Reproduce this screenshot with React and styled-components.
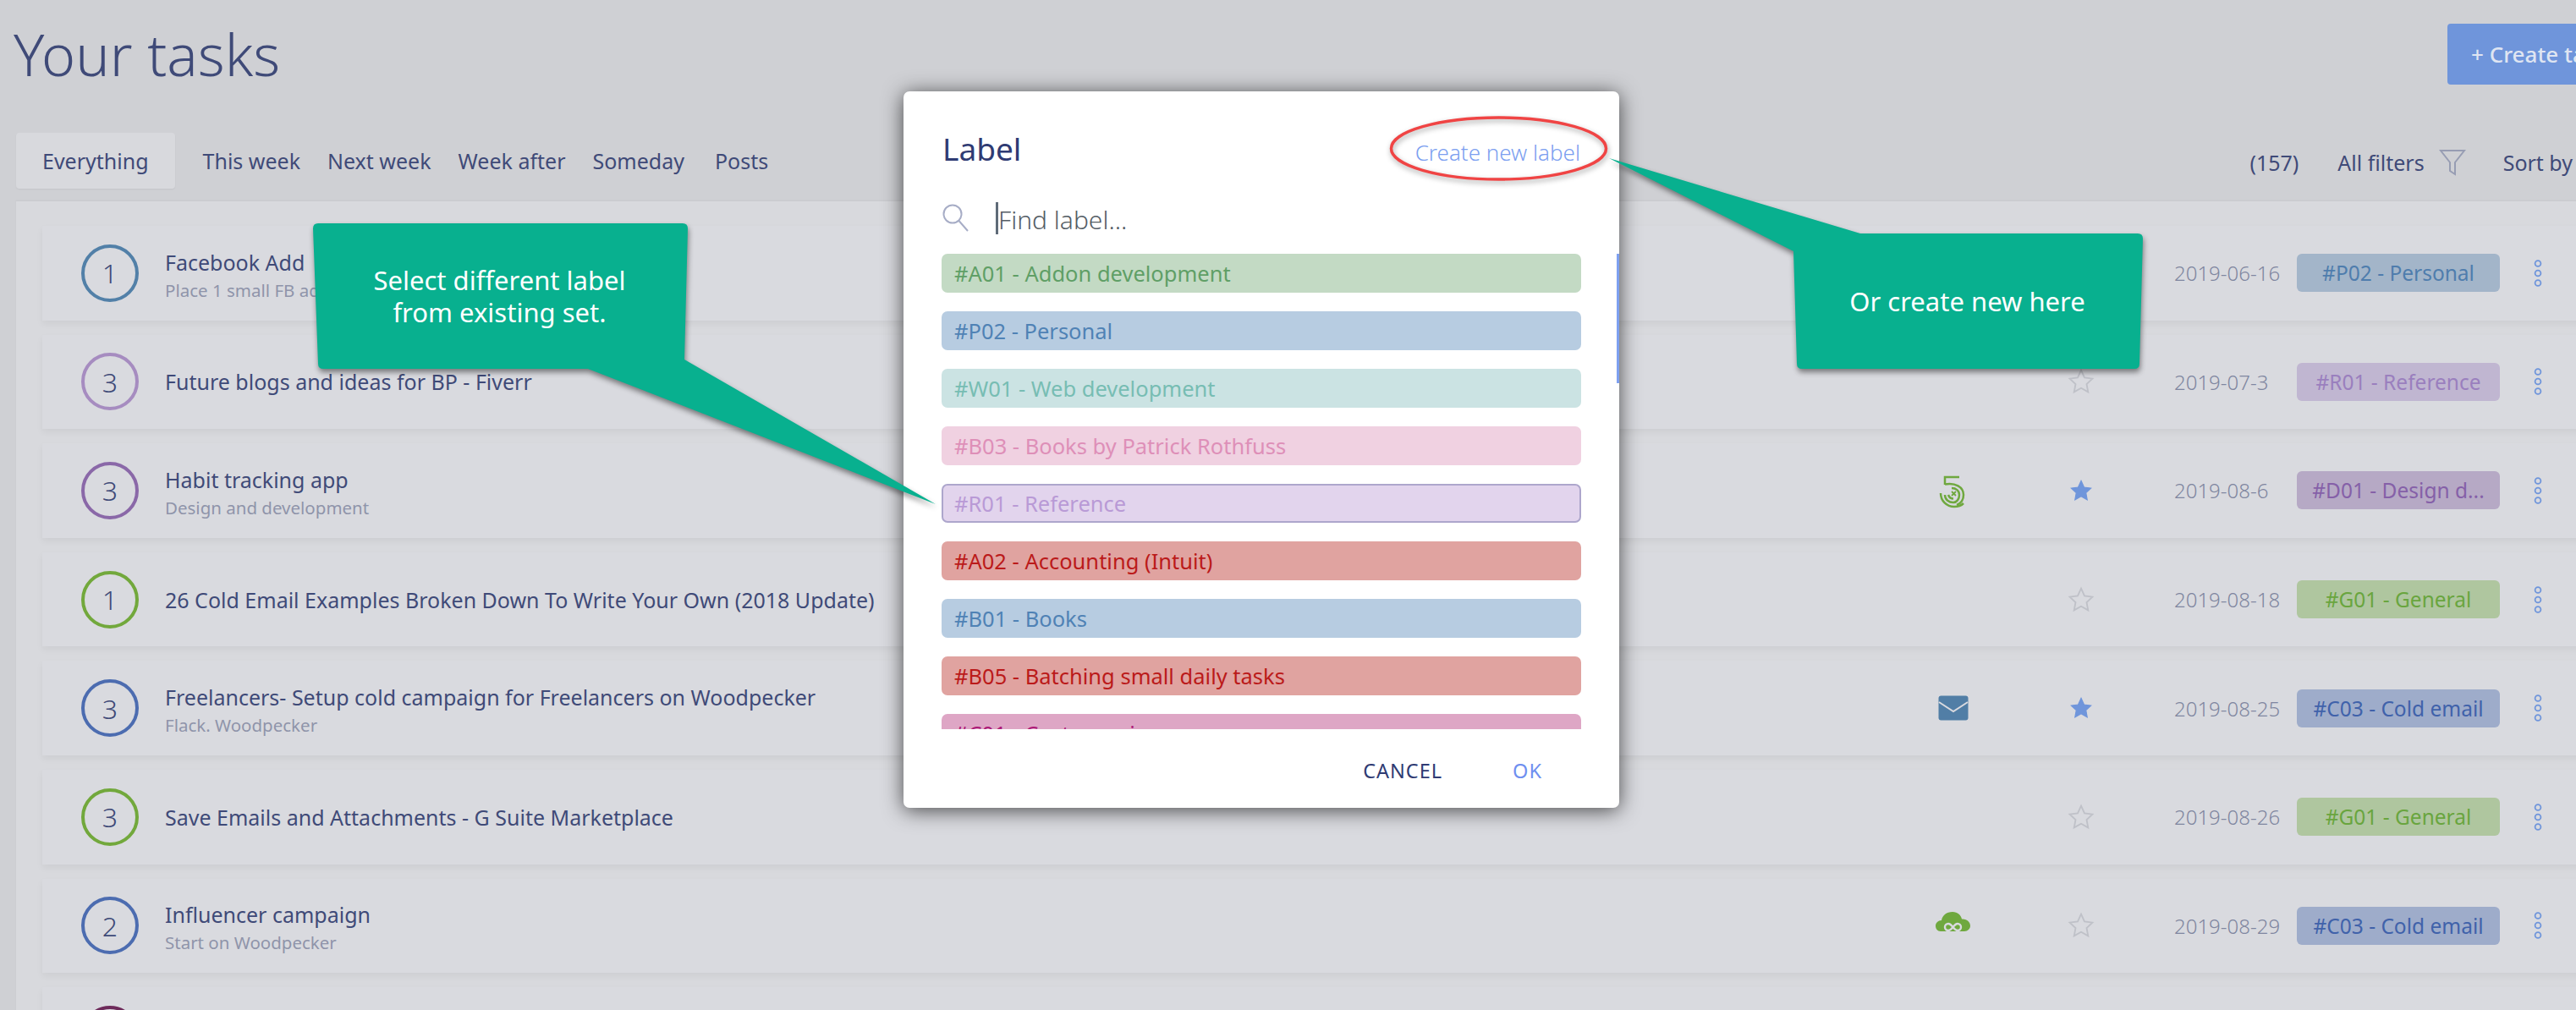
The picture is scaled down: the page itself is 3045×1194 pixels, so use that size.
import React from 'react';
import styled, { createGlobalStyle } from 'styled-components';

const GlobalStyle = createGlobalStyle`
  html, body {
    margin: 0;
    padding: 0;
    background: #cfd0d4;
  }
  body {
    font-family: "Noto Sans", "Open Sans", sans-serif;
    color: #3f4a78;
  }
`;

const Viewport = styled.div`
  position: relative;
  width: 3045px;
  height: 1194px;
  overflow: hidden;
  background: #cfd0d4;
`;

const Page = styled.div`
  width: 3110px;
`;

const Header = styled.header`
  display: flex;
  justify-content: space-between;
  align-items: center;
  height: 72px;
  padding: 28px 17px 0 16px;
`;

const Title = styled.h1`
  margin: 0;
  font-size: 68px;
  font-weight: 300;
  line-height: 72px;
  color: #3f4a78;
`;

const CreateButton = styled.button`
  width: 200px;
  height: 72px;
  padding: 0 0 0 28px;
  border: 0;
  border-radius: 4px;
  background: #6f95db;
  color: #dfe5f2;
  font-family: inherit;
  font-size: 26px;
  font-weight: 500;
  text-align: left;
  white-space: nowrap;
`;

const Toolbar = styled.div`
  display: flex;
  align-items: center;
  height: 66px;
  margin: 57px 69px 15px 19px;
  font-size: 25px;
`;

const Tab = styled.div`
  display: flex;
  align-items: center;
  height: 66px;
  padding: 0 ${p => (p.$active ? 31 : 16)}px;
  margin-left: ${p => p.$gap || 0}px;
  border-radius: 4px;
  background: ${p => (p.$active ? '#d8d9dd' : 'transparent')};
  box-shadow: ${p => (p.$active ? '0 1px 2px rgba(0,0,0,.05)' : 'none')};
`;

const ToolbarRight = styled.div`
  display: flex;
  align-items: center;
  margin-left: auto;
  padding-top: 4px;
`;

const FilterText = styled.span`
  margin-left: ${p => p.$gap || 0}px;
`;

const FunnelIcon = styled.svg`
  width: 32px;
  height: 32px;
  margin-left: 17px;
  fill: none;
  stroke: #979db3;
  stroke-width: 2;
`;

const Panel = styled.section`
  display: flex;
  flex-direction: column;
  gap: 17px;
  margin-left: 19px;
  padding: 29px 31px 40px;
  background: #d8d9dd;
  box-shadow: 0 -1px 2px rgba(0, 0, 0, 0.04);
`;

const Row = styled.article`
  display: flex;
  align-items: center;
  height: 111.6px;
  flex: none;
  padding-left: 46px;
  padding-right: 34px;
  background: #d9dadf;
  box-shadow: 0 4px 8px rgba(0, 0, 0, 0.05);
`;

const Priority = styled.div`
  display: flex;
  align-items: center;
  justify-content: center;
  flex: none;
  box-sizing: border-box;
  width: 68px;
  height: 68px;
  margin-right: 31px;
  border: 4px solid ${p => p.$color};
  border-radius: 50%;
  font-size: 32px;
  font-weight: 300;
  color: #3f4a78;
`;

const TaskText = styled.div`
  flex: 1;
  min-width: 0;
  padding-top: ${p => (p.$hasSub ? 8 : 0)}px;
`;

const TaskTitle = styled.div`
  font-size: 25px;
  line-height: 32px;
  color: #3f4a78;
  white-space: nowrap;
`;

const TaskSub = styled.div`
  font-size: 20.5px;
  line-height: 34px;
  color: #8f94aa;
  white-space: nowrap;
`;

const IconCell = styled.div`
  display: flex;
  align-items: center;
  justify-content: center;
  flex: none;
  width: 100px;
`;

const StarCell = styled.div`
  display: flex;
  align-items: center;
  justify-content: center;
  flex: none;
  width: 100px;
  margin-left: 51px;
`;

const StarIcon = styled.svg`
  width: ${p => (p.$on ? 28 : 32)}px;
  height: ${p => (p.$on ? 28 : 32)}px;
  fill: ${p => (p.$on ? '#6f95db' : 'none')};
  stroke: ${p => (p.$on ? '#6f95db' : '#bfc1c8')};
  stroke-width: ${p => (p.$on ? 1 : 1.4)};
`;

const DateCell = styled.div`
  flex: none;
  width: 145px;
  margin-left: 60px;
  font-size: 24px;
  font-weight: 300;
  color: #7f86a0;
  white-space: nowrap;
`;

const Tag = styled.div`
  flex: none;
  box-sizing: border-box;
  width: 240px;
  height: 45px;
  padding: 0 12px;
  border-radius: 6px;
  background: ${p => p.$bg};
  color: ${p => p.$fg};
  font-size: 24.5px;
  line-height: 45px;
  text-align: center;
  white-space: nowrap;
  overflow: hidden;
`;

const DotsCell = styled.div`
  display: flex;
  justify-content: center;
  flex: none;
  width: 90px;
`;

const DotsIcon = styled.svg`
  width: 12px;
  height: 36px;
  fill: none;
  stroke: #6f95db;
  stroke-width: 1.8;
`;

const Modal = styled.div`
  position: absolute;
  left: 1068px;
  top: 108px;
  width: 846px;
  height: 847px;
  border-radius: 7px;
  background: #fff;
  box-shadow: 0 3px 24px rgba(0, 0, 0, 0.68);
`;

const ModalHeader = styled.div`
  display: flex;
  justify-content: space-between;
  align-items: baseline;
  height: 82px;
  padding: 46px 46px 0;
`;

const ModalTitle = styled.div`
  font-size: 37px;
  line-height: 44px;
  color: #2f3b73;
`;

const CreateLink = styled.div`
  font-size: 26px;
  font-weight: 300;
  color: #7c9ff0;
`;

const SearchRow = styled.div`
  display: flex;
  align-items: center;
  height: 44px;
  margin-bottom: 20px;
  padding-left: 45px;
`;

const SearchIcon = styled.svg`
  flex: none;
  width: 32px;
  height: 34px;
  margin-right: 32px;
  fill: none;
  stroke: #a7adc6;
  stroke-width: 2;
`;

const FindInput = styled.div`
  box-sizing: border-box;
  height: 38px;
  border-left: 3px solid #5f6b78;
  font-size: 30px;
  font-weight: 300;
  line-height: 42px;
  color: #555d66;
`;

const LabelList = styled.div`
  display: flex;
  flex-direction: column;
  gap: 22px;
  height: 562px;
  margin: 0 45px;
  overflow: hidden;
`;

const LabelItem = styled.div`
  flex: none;
  box-sizing: border-box;
  height: 46px;
  padding-left: ${p => (p.$selected ? 13 : 15)}px;
  border: ${p => (p.$selected ? '2px solid #ada6cc' : '0')};
  border-radius: 7px;
  background: ${p => p.$bg};
  color: ${p => p.$fg};
  font-size: 25.5px;
  line-height: ${p => (p.$selected ? 42 : 46)}px;
`;

const ScrollThumb = styled.div`
  position: absolute;
  right: 0;
  top: 192px;
  width: 3px;
  height: 153px;
  background: #7ea0f0;
`;

const ModalFooter = styled.div`
  display: flex;
  justify-content: flex-end;
  align-items: center;
  gap: 83px;
  height: 88px;
  padding: 5px 91px 0 0;
  font-size: 23.5px;
  letter-spacing: 1px;
`;

const CancelText = styled.span`
  color: #2f3b73;
`;

const OkText = styled.span`
  color: #6f8ff0;
`;

const RedEllipse = styled.svg`
  position: absolute;
  left: 1635px;
  top: 130px;
  width: 275px;
  height: 95px;
  filter: drop-shadow(1px 3px 3px rgba(0, 0, 0, 0.35));
`;

const CalloutShape = styled.svg`
  position: absolute;
  left: ${p => p.$left}px;
  top: ${p => p.$top}px;
  width: ${p => p.$w}px;
  height: ${p => p.$h}px;
  filter: drop-shadow(1px 4px 3px rgba(0, 0, 0, 0.45));
`;

const CalloutText = styled.div`
  position: absolute;
  left: ${p => p.$left}px;
  top: ${p => p.$top}px;
  width: ${p => p.$w}px;
  height: ${p => p.$h}px;
  display: flex;
  align-items: center;
  justify-content: center;
  color: #fff;
  font-size: 31px;
  line-height: 38px;
  text-align: center;
`;

const FiveLogo = () => (
  <svg width="60" height="60" viewBox="0 0 60 60" fill="none" stroke="#6fa83f" strokeWidth="2.5">
    <path d="M37 14H20V23" />
    <path d="M20 22.500C32 20 42 26 42 35C42 41 39 45 34 47" />
    <path d="M15 33C15 42 22 49 31 49C35 49 39 48 42 45" />
    <path d="M20 35C20 41 25 44 30 44C34 44 37 40 37 35C37 30 33 27 28 27" />
    <path d="M24 35C25 38 27 39.500 30 39.500" />
    <path d="M28 31L33 36M33 31L28 36" strokeWidth="1.8" />
  </svg>
);

const CloudLogo = () => (
  <svg width="60" height="50" viewBox="0 0 60 50">
    <path fill="#6fa83f" d="M15 32C11 32 9 29 9 25.500C9 22 12 19 16 19C17 13 22 9 29 9C35 9 39 13 40 17.500C46 17 50 21 50 25.500C50 29 47 32 43 32Z" />
    <path fill="none" stroke="#d9dadf" strokeWidth="2.4" d="M29.500 27C27.500 24.500 26 23 24 23A4 4 0 0 0 24 31C26 31 27.500 29.500 29.500 27C31.500 24.500 33 23 35 23A4 4 0 0 1 35 31C33 31 31.500 29.500 29.500 27Z" />
  </svg>
);

const MailLogo = () => (
  <svg width="36" height="30" viewBox="0 0 36 30">
    <rect x="0.500" y="0.500" width="35" height="29" rx="3" fill="#517ea6" />
    <path d="M1 8L18 19L35 8" fill="none" stroke="#d9dadf" strokeWidth="2" />
  </svg>
);

const logos = { five: <FiveLogo />, mail: <MailLogo />, cloud: <CloudLogo /> };

const tagStyles = {
  P02: { bg: '#a3b5c9', fg: '#4f7dad', text: '#P02 - Personal' },
  R01: { bg: '#c0b6d1', fg: '#9a7fbe', text: '#R01 - Reference' },
  D01: { bg: '#b6a9c5', fg: '#8560a8', text: '#D01 - Design d...' },
  G01: { bg: '#afc69f', fg: '#69a53e', text: '#G01 - General' },
  C03: { bg: '#9eacca', fg: '#4062aa', text: '#C03 - Cold email' },
};

const tasks = [
  { n: 1, color: '#5280a8', title: 'Facebook Add', sub: 'Place 1 small FB ad', date: '2019-06-16', tag: 'P02' },
  { n: 3, color: '#a68cc0', title: 'Future blogs and ideas for BP - Fiverr', date: '2019-07-3', tag: 'R01' },
  { n: 3, color: '#8a68a8', title: 'Habit tracking app', sub: 'Design and development', date: '2019-08-6', tag: 'D01', logo: 'five', star: true },
  { n: 1, color: '#72a83c', title: '26 Cold Email Examples Broken Down To Write Your Own (2018 Update)', date: '2019-08-18', tag: 'G01' },
  { n: 3, color: '#4c6cb0', title: 'Freelancers- Setup cold campaign for Freelancers on Woodpecker', sub: 'Flack. Woodpecker', date: '2019-08-25', tag: 'C03', logo: 'mail', star: true },
  { n: 3, color: '#72a83c', title: 'Save Emails and Attachments - G Suite Marketplace', date: '2019-08-26', tag: 'G01' },
  { n: 2, color: '#4c6cb0', title: 'Influencer campaign', sub: 'Start on Woodpecker', date: '2019-08-29', tag: 'C03', logo: 'cloud' },
];

const labels = [
  { text: '#A01 - Addon development', bg: '#c3dac4', fg: '#5f9f66' },
  { text: '#P02 - Personal', bg: '#b7cce1', fg: '#4f82b5' },
  { text: '#W01 - Web development', bg: '#cbe3e3', fg: '#77bdb3' },
  { text: '#B03 - Books by Patrick Rothfuss', bg: '#f0d1e1', fg: '#de8fb8' },
  { text: '#R01 - Reference', bg: '#e2d4ed', fg: '#b99ad6', selected: true },
  { text: '#A02 - Accounting (Intuit)', bg: '#e0a3a0', fg: '#bb1a1a' },
  { text: '#B01 - Books', bg: '#b7cce1', fg: '#4f82b5' },
  { text: '#B05 - Batching small daily tasks', bg: '#e0a3a0', fg: '#bb1a1a' },
  { text: '#C01 - Customer insurance', bg: '#dea6c5', fg: '#ad1a78' },
];

const tabs = [
  { text: 'Everything', active: true },
  { text: 'This week', gap: 17 },
  { text: 'Next week' },
  { text: 'Week after' },
  { text: 'Someday' },
  { text: 'Posts', gap: 4 },
];

const Star = ({ on }) => (
  <StarIcon $on={on} viewBox="0 0 24 24">
    <path d="M12 2l3 6.600 7 .9-5.100 4.800 1.300 7-6.200-3.500-6.200 3.500 1.300-7L2 9.500l7-.9z" />
  </StarIcon>
);

const TaskRow = ({ task }) => {
  const tag = tagStyles[task.tag];
  return (
    <Row>
      <Priority $color={task.color}>{task.n}</Priority>
      <TaskText $hasSub={!!task.sub}>
        <TaskTitle>{task.title}</TaskTitle>
        {task.sub && <TaskSub>{task.sub}</TaskSub>}
      </TaskText>
      <IconCell>{task.logo && logos[task.logo]}</IconCell>
      <StarCell><Star on={task.star} /></StarCell>
      <DateCell>{task.date}</DateCell>
      <Tag $bg={tag.bg} $fg={tag.fg}>{tag.text}</Tag>
      <DotsCell>
        <DotsIcon viewBox="0 0 12 36">
          <circle cx="6" cy="6.500" r="3.400" />
          <circle cx="6" cy="18" r="3.400" />
          <circle cx="6" cy="29.500" r="3.400" />
        </DotsIcon>
      </DotsCell>
    </Row>
  );
};

export default function App() {
  return (
    <Viewport>
      <GlobalStyle />
      <Page>
        <Header>
          <Title>Your tasks</Title>
          <CreateButton>+ Create task</CreateButton>
        </Header>
        <Toolbar>
          {tabs.map(t => (
            <Tab key={t.text} $active={t.active} $gap={t.gap}>{t.text}</Tab>
          ))}
          <ToolbarRight>
            <span>(157)</span>
            <FilterText $gap={46}>All filters</FilterText>
            <FunnelIcon viewBox="0 0 32 32">
              <path d="M2 2H30L19 16V30L13 26V16Z" />
            </FunnelIcon>
            <FilterText $gap={44}>Sort by</FilterText>
          </ToolbarRight>
        </Toolbar>
        <Panel>
          {tasks.map(t => <TaskRow key={t.date} task={t} />)}
          <Row><Priority $color="#6d2a5a" /></Row>
        </Panel>
      </Page>

      <Modal>
        <ModalHeader>
          <ModalTitle>Label</ModalTitle>
          <CreateLink>Create new label</CreateLink>
        </ModalHeader>
        <SearchRow>
          <SearchIcon viewBox="0 0 32 34">
            <circle cx="13" cy="12" r="10.500" />
            <path d="M20.500 20L31 32" />
          </SearchIcon>
          <FindInput>Find label...</FindInput>
        </SearchRow>
        <LabelList>
          {labels.map(l => (
            <LabelItem key={l.text} $bg={l.bg} $fg={l.fg} $selected={l.selected}>{l.text}</LabelItem>
          ))}
        </LabelList>
        <ScrollThumb />
        <ModalFooter>
          <CancelText>CANCEL</CancelText>
          <OkText>OK</OkText>
        </ModalFooter>
      </Modal>

      <RedEllipse viewBox="1635 130 275 95">
        <ellipse cx="1771.500" cy="175.500" rx="127" ry="36.500" fill="none" stroke="#f04444" strokeWidth="3.500" />
      </RedEllipse>

      <CalloutShape $left={360} $top={254} $w={760} $h={360} viewBox="360 254 760 360">
        <path fill="#08b08f" d="M376 264H807Q813 264 813 270L809 425L1106 596L695 436H382Q376 436 376 430L370 270Q370 264 376 264Z" />
      </CalloutShape>
      <CalloutText $left={370} $top={264} $w={441} $h={172}>Select different label<br />from existing set.</CalloutText>

      <CalloutShape $left={1895} $top={180} $w={650} $h={270} viewBox="1895 180 650 270">
        <path fill="#08b08f" d="M1902 187L2199 276H2527Q2533 276 2533 282L2529 430Q2529 436 2523 436H2130Q2124 436 2124 430L2120 297Z" />
      </CalloutShape>
      <CalloutText $left={2120} $top={276} $w={411} $h={160}>Or create new here</CalloutText>
    </Viewport>
  );
}
